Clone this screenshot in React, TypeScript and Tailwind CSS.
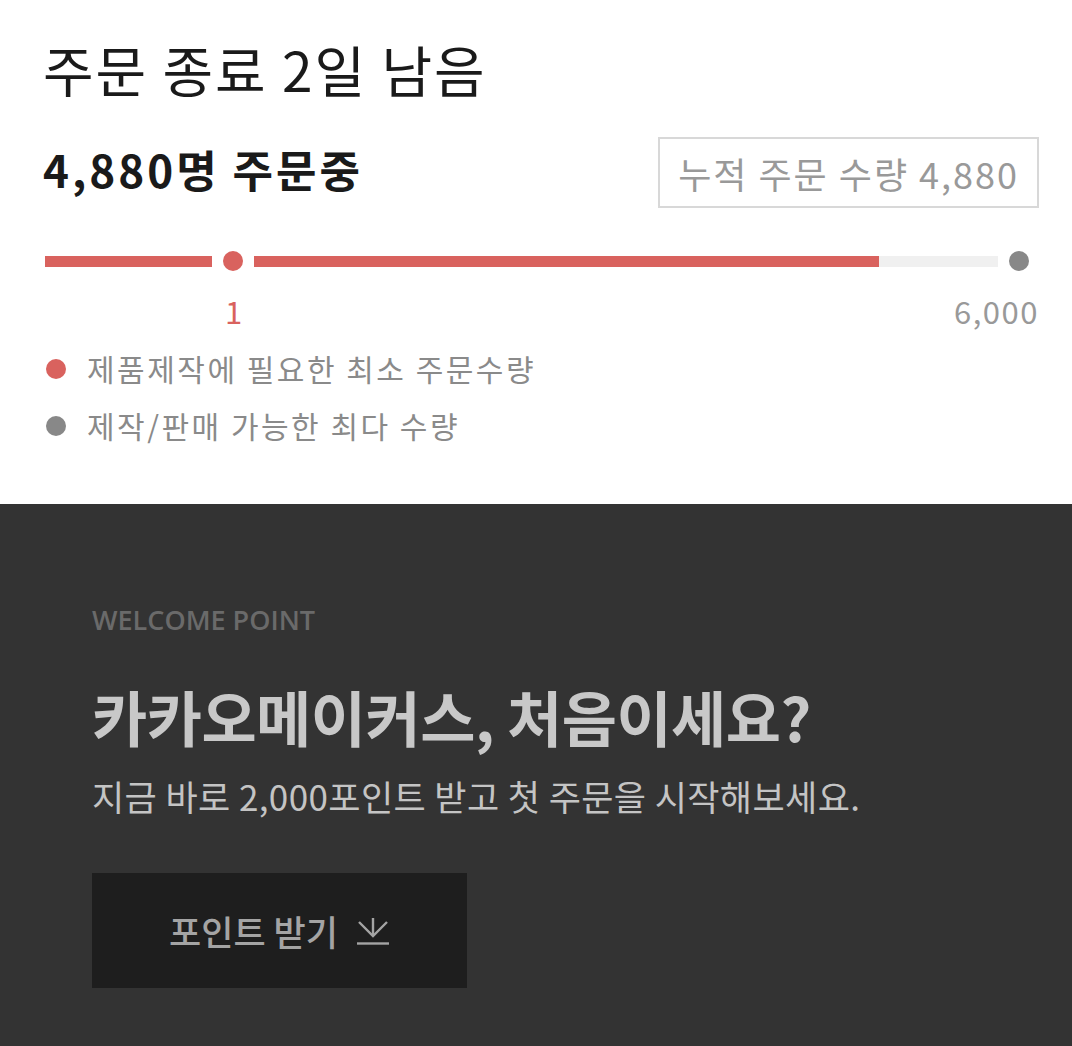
const font = { fontFamily: '"Noto Sans CJK KR", "Noto Sans", sans-serif' }

function DownloadIcon() {
  return (
    <svg width="34" height="28" viewBox="0 0 34 28" fill="none" stroke="currentColor" strokeWidth="2.4" strokeLinecap="butt">
      <path d="M17 1 V19" />
      <path d="M3 5 L17 19 L31 5" />
      <path d="M1 26.5 H33" />
    </svg>
  )
}

export default function App() {
  return (
    <div className="w-[1072px] h-[1046px] flex flex-col bg-white" style={font}>
      <section className="h-[504px] pl-[43px] pr-[33px] pt-[28px]">
        <h1 className="text-[55px] font-normal leading-[80px] tracking-[2px] text-[#1a1a1a]">주문 종료 2일 남음</h1>

        <div className="mt-[25px] flex items-center justify-between">
          <p className="text-[44px] font-bold leading-[56px] text-[#1a1a1a] tracking-[3px]">4,880명 주문중</p>
          <div className="mt-[4px] -mb-[4px] border-2 border-[#d8d8d8] h-[71px] px-[18px] flex items-center">
            <span className="text-[36px] text-[#999999] leading-none tracking-[2px]">누적 주문 수량 4,880</span>
          </div>
        </div>

        <div className="mt-[45px] ml-[2px] mr-[10px] flex items-center h-[24px]">
          <div className="flex-1 relative h-[11px] bg-[#f0f0f0]">
            <div className="absolute left-0 top-0 h-full w-[87.5%] bg-[#d9625e]" />
            <div className="absolute left-[167px] top-1/2 -translate-y-1/2 w-[42px] h-[24px] bg-white flex items-center justify-center">
              <div className="w-[20px] h-[20px] rounded-full bg-[#d9625e]" />
            </div>
          </div>
          <div className="w-[20px] h-[20px] rounded-full bg-[#888888] ml-[11px]" />
        </div>

        <div className="mt-[8px] relative h-[60px] text-[31px] leading-[60px] tracking-[1.5px]">
          <span className="absolute left-[182px] text-[#d9625e]">1</span>
          <span className="absolute right-0 text-[#999999]">6,000</span>
        </div>

        <ul className="mt-[6px] flex flex-col gap-[14px] text-[30px] text-[#8a8a8a] leading-[43px] tracking-[2.5px]">
          <li className="flex items-center gap-[21px]">
            <span className="w-[20px] h-[20px] rounded-full bg-[#d9625e] ml-[3px]" />
            제품제작에 필요한 최소 주문수량
          </li>
          <li className="flex items-center gap-[21px]">
            <span className="w-[20px] h-[20px] rounded-full bg-[#888888] ml-[3px]" />
            제작/판매 가능한 최다 수량
          </li>
        </ul>
      </section>

      <section className="flex-1 bg-[#333333] px-[92px] pt-[96px]">
        <p className="text-[27px] font-semibold text-[#6a6a6a] leading-[40px]" style={{ fontFamily: '"Open Sans", "Noto Sans", sans-serif' }}>WELCOME POINT</p>
        <h2 className="mt-[40px] text-[60px] font-bold text-[#c8c8c8] leading-[72px] tracking-[-0.5px]">카카오메이커스, 처음이세요?</h2>
        <p className="mt-[22px] text-[35px] text-[#c4c4c4] leading-[44px] tracking-[0.4px]">지금 바로 2,000포인트 받고 첫 주문을 시작해보세요.</p>
        <button className="mt-[55px] w-[375px] h-[115px] bg-[#1e1e1e] flex items-center justify-center gap-[18px] text-[35px] font-medium text-[#a4a4a4]">
          <span className="leading-none">포인트 받기</span>
          <DownloadIcon />
        </button>
      </section>
    </div>
  )
}
